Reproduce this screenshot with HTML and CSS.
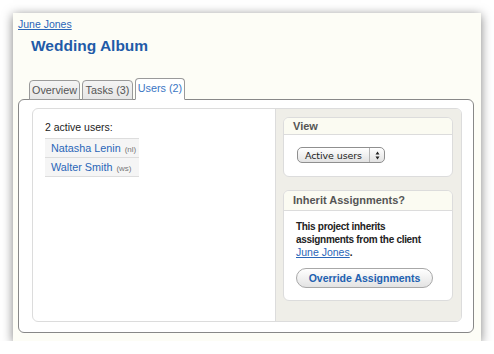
FILE: index.html
```html
<!DOCTYPE html>
<html lang="en">

<head>
    <meta charset="UTF-8">
    <title>Wedding Album - Users</title>
    <link rel="stylesheet" href="styles.css">
</head>

<body>
    <div class="window">
        <a href="#" class="client">June Jones</a>
        <h1 class="title">Wedding Album</h1>

        <div class="tabs">
            <a href="#" class="tab">Overview</a>
            <a href="#" class="tab">Tasks (3)</a>
            <a href="#" class="tab active">Users (2)</a>
        </div>

        <div class="tab-body">
            <div class="inner">
                <div class="main">
                    <p class="count">2 active users:</p>
                    <ul class="users">
                        <li><a href="#">Natasha Lenin</a> <span class="initials">(nl)</span></li>
                        <li><a href="#">Walter Smith</a> <span class="initials">(ws)</span></li>
                    </ul>
                </div>

                <div class="sidebar">
                    <div class="box">
                        <div class="box-head">View</div>
                        <div class="box-body view-body">
                            <div class="select">
                                <span class="select-label">Active users</span>
                                <span class="select-arrows">
                                    <svg width="5" height="9" viewBox="0 0 5 9">
                                        <path d="M2.5 0.5 L4.5 3.5 L0.5 3.5 Z M2.5 8.5 L4.5 5.5 L0.5 5.5 Z" fill="#222" />
                                    </svg>
                                </span>
                            </div>
                        </div>
                    </div>

                    <div class="box">
                        <div class="box-head tall">Inherit Assignments?</div>
                        <div class="box-body inherit-body">
                            <p class="note">This project inherits assignments from the client <a href="#">June Jones</a>.</p>
                            <button class="button">Override Assignments</button>
                        </div>
                    </div>
                </div>
            </div>
        </div>
    </div>
</body>

</html>
```

FILE: styles.css
```css
* {
    box-sizing: border-box;
    margin: 0;
    padding: 0;
}

body {
    background-color: #ffffff;
    font-family: "Liberation Sans", Arial, sans-serif;
    font-size: 10.5px;
    color: #222222;
    padding: 13px 0 0 13px;
}

a {
    color: #2a66b8;
}

.window {
    width: 468px;
    background-color: #fdfdf6;
    box-shadow: 0 2px 10px rgba(0, 0, 0, 0.5);
    padding: 5px 7px 8px 5px;
    display: flex;
    flex-direction: column;
}

.client {
    line-height: 13px;
    align-self: flex-start;
}

.title {
    font-size: 15.5px;
    line-height: 18px;
    color: #1f5ba8;
    margin: 6px 0 0 13px;
}

/* tabs */
.tabs {
    display: flex;
    align-items: flex-end;
    gap: 2px;
    margin: 23px 0 0 11px;
    position: relative;
    z-index: 1;
}

.tab {
    display: block;
    width: 51px;
    height: 20px;
    line-height: 18px;
    text-align: center;
    text-decoration: none;
    color: #555555;
    background: linear-gradient(#f4f4f4, #e6e6e6);
    border: 1px solid #9a9a9a;
    border-radius: 4px 4px 0 0;
    margin-bottom: -1px;
    font-size: 10.8px;
}

.tab.active {
    width: 50px;
    height: 22px;
    line-height: 19px;
    color: #3a76c4;
    background: #ffffff;
    border-bottom-color: #ffffff;
}

.tab-body {
    background-color: #ffffff;
    border: 1px solid #888888;
    border-radius: 6px;
    padding: 8px 11px 10px 13px;
}

.inner {
    display: flex;
    border: 1px solid #dcdcdc;
    border-radius: 6px;
    overflow: hidden;
}

/* users list */
.main {
    width: 242px;
    padding: 12px 12px 0 12px;
}

.count {
    line-height: 13px;
}

.users {
    list-style: none;
    width: 94px;
    margin-top: 4px;
    border-top: 1px solid #dddddd;
}

.users li {
    height: 19px;
    line-height: 18px;
    padding-left: 6px;
    background-color: #f5f5f5;
    border-bottom: 1px solid #dddddd;
    white-space: nowrap;
    font-size: 10.8px;
}

.users a {
    text-decoration: none;
}

.initials {
    font-size: 8px;
    color: #777777;
    margin-left: 1px;
}

/* sidebar */
.sidebar {
    flex: 1;
    background-color: #efeee8;
    border-left: 1px solid #dcdcdc;
    padding: 8px 8px 20px 7px;
    display: flex;
    flex-direction: column;
    gap: 13px;
}

.box {
    background-color: #ffffff;
    border: 1px solid #dcdcdc;
    border-radius: 6px;
    overflow: hidden;
}

.box-head {
    font-size: 11px;
    font-weight: bold;
    color: #555555;
    line-height: 16px;
    padding: 0 9px;
    background-color: #fbfbf2;
    border-bottom: 1px solid #dcdcdc;
}

.box-head.tall {
    line-height: 19px;
}

.view-body {
    padding: 12px 13px 13px;
}

.select {
    width: 88px;
    height: 16px;
    display: flex;
    align-items: center;
    border: 1px solid #8f8f8f;
    border-radius: 5px;
    background: linear-gradient(#ffffff, #e2e2e2);
    box-shadow: inset 0 1px 0 #ffffff;
}

.select-label {
    flex: 1;
    font-family: "DejaVu Sans", sans-serif;
    font-size: 9.5px;
    padding-left: 7px;
    letter-spacing: -0.1px;
}

.select-arrows {
    width: 15px;
    height: 100%;
    display: flex;
    align-items: center;
    justify-content: center;
    border-left: 1px solid #b5b5b5;
}

.inherit-body {
    padding: 10px 12px 12px;
}

.note {
    font-size: 10px;
    font-weight: bold;
    line-height: 12.5px;
    letter-spacing: -0.3px;
}

.note a {
    font-weight: normal;
    letter-spacing: 0;
    font-size: 10.5px;
}

.button {
    display: block;
    margin-top: 8px;
    width: 137px;
    height: 20px;
    border: 1px solid #a8a8a8;
    border-radius: 10px;
    background: linear-gradient(#ffffff, #e3e3e3);
    color: #2160b0;
    font-family: "Liberation Sans", Arial, sans-serif;
    font-size: 10.5px;
    font-weight: bold;
    cursor: pointer;
}
```
